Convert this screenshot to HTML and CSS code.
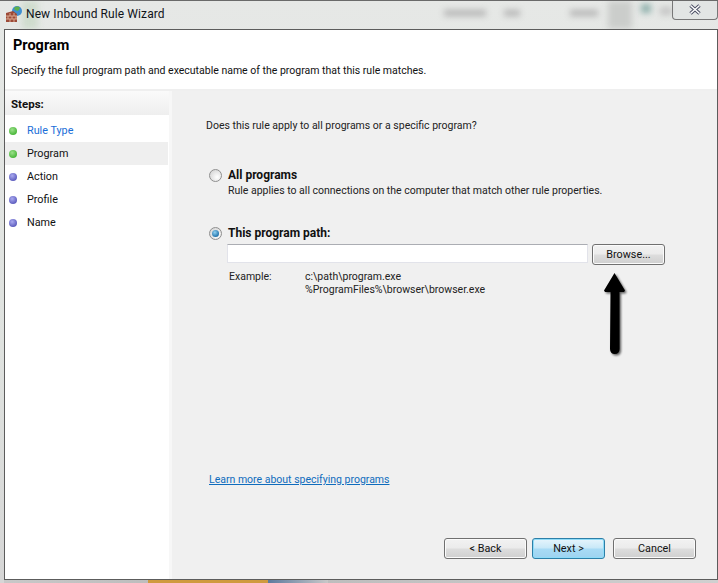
FILE: index.html
```html
<!DOCTYPE html>
<html lang="en">
<head>
<meta charset="utf-8">
<title>New Inbound Rule Wizard</title>
<link rel="stylesheet" href="styles.css">
</head>
<body>
<div class="window">
  <div class="glass" aria-hidden="true">
    <span class="blur b1"></span><span class="blur b2"></span><span class="blur b3"></span><span class="blur b4"></span><span class="blur b5"></span><span class="blur b6"></span><span class="blur b7"></span>
  </div>
  <header class="titlebar">
    <svg class="appicon" width="18" height="18" viewBox="0 0 18 18">
      <circle cx="12" cy="6" r="5" fill="#3f8fd0"/>
      <path d="M9 3c2-2 5-2 6 0l-2 3-3-1z" fill="#5fb04a"/>
      <path d="M1 8l7-2 4 3v8H1z" fill="#9c4a38"/>
      <path d="M1 11h11M1 14h11M5 8v3M9 8v3M3 11v3M7 11v3M11 11v3M5 14v3M9 14v3" stroke="#d9a890" stroke-width="1" fill="none"/>
    </svg>
    <span class="wintitle">New Inbound Rule Wizard</span>
    <button class="close" aria-label="Close">
      <svg width="12" height="11" viewBox="0 0 12 11"><path d="M1.500 1.500l9 8M10.500 1.500l-9 8" stroke="#4a4e63" stroke-width="3.400" fill="none"/><path d="M1.500 1.500l9 8M10.500 1.500l-9 8" stroke="#fff" stroke-width="1.500" fill="none"/></svg>
    </button>
  </header>
  <div class="client">
    <div class="head">
      <h1>Program</h1>
      <p>Specify the full program path and executable name of the program that this rule matches.</p>
    </div>
    <div class="body">
      <nav class="steps">
        <div class="steps-title">Steps:</div>
        <ul>
          <li class="done link"><i class="dot green"></i>Rule Type</li>
          <li class="current"><i class="dot green"></i>Program</li>
          <li><i class="dot blue"></i>Action</li>
          <li><i class="dot blue"></i>Profile</li>
          <li><i class="dot blue"></i>Name</li>
        </ul>
      </nav>
      <main class="panel">
        <p class="question">Does this rule apply to all programs or a specific program?</p>
        <div class="option first">
          <span class="radio"></span>
          <div>
            <div class="opt-title">All programs</div>
            <div class="opt-desc">Rule applies to all connections on the computer that match other rule properties.</div>
          </div>
        </div>
        <div class="option second">
          <span class="radio on"></span>
          <div class="opt-title">This program path:</div>
        </div>
        <div class="pathrow">
          <input class="path" type="text" aria-label="Program path">
          <button class="btn browse">Browse...</button>
          <svg class="arrow" width="30" height="90" viewBox="0 0 30 90">
            <defs><filter id="sh" x="-40%" y="-10%" width="180%" height="120%"><feGaussianBlur stdDeviation="1.300"/></filter></defs>
            <path transform="translate(1.500 1.500)" opacity=".6" filter="url(#sh)" d="M12.500 1L2 18.500l1 1.500h5.500L8 77q.2 5 4.800 5t4.800-5L17.500 20H22l1-1.500z" fill="#000"/>
            <path d="M12.500 1L2 18.500l1 1.500h5.500L8 77q.2 5 4.800 5t4.800-5L17.500 20H22l1-1.500z" fill="#000"/>
          </svg>
        </div>
        <div class="example">
          <span class="ex-label">Example:</span>
          <span class="ex-values">c:\path\program.exe<br>%ProgramFiles%\browser\browser.exe</span>
        </div>
        <a class="learn" href="#">Learn more about specifying programs</a>
        <div class="actions">
          <button class="btn wide">&lt; Back</button>
          <button class="btn wide primary">Next &gt;</button>
          <button class="btn wide cancel">Cancel</button>
        </div>
      </main>
    </div>
  </div>
  <div class="bottomstrip" aria-hidden="true"><span class="orange"></span><span class="bluebar"></span></div>
</div>
</body>
</html>
```
FILE: styles.css
```css
* { box-sizing: border-box; }
html, body { margin: 0; height: 100%; }
body { font-family: Roboto, "Liberation Sans", Arial, sans-serif; font-size: 10.500px; color: #111; overflow: hidden; }
.window {
  position: relative; width: 718px; height: 583px; overflow: hidden;
  display: flex; flex-direction: column;
  background: linear-gradient(#e6e8e6, #dfe2df 60%, #d6d6d6);
  border-top: 1px solid #6a6a6a;
  padding: 0 0 0 4px;
}
.glass { position: absolute; inset: 0; overflow: hidden; }
.blur { position: absolute; filter: blur(3px); display: block; }
.b1 { left: 22px; top: 0; width: 16px; height: 28px; background: #cfdccd; }
.b2 { left: 444px; top: 9px; width: 42px; height: 6px; background: #b4b4b4; }
.b3 { left: 504px; top: 9px; width: 16px; height: 6px; background: #b4b4b4; }
.b4 { left: 570px; top: 9px; width: 28px; height: 6px; background: #b4b4b4; }
.b5 { left: 608px; top: 0; width: 24px; height: 28px; background: #cbcdcb; }
.b6 { left: 641px; top: 3px; width: 10px; height: 9px; background: #8fb0ac; }
.b7 { left: 660px; top: 6px; width: 12px; height: 8px; background: #c4c4c4; }
.titlebar { position: relative; height: 28px; flex: none; display: flex; align-items: center; padding-left: 1px; }
.appicon { flex: none; margin-top: -2px; }
.wintitle { margin-left: 3px; font-size: 12px; letter-spacing: .1px; color: #10141a; margin-top: -2px; }
.close {
  position: absolute; right: 0; top: -1px; width: 46px; height: 20px; padding: 0;
  display: flex; align-items: center; justify-content: center;
  background: rgba(225,228,228,.65); border: 1px solid #777; border-top: 0;
  border-radius: 0 0 4px 4px;
}
.client {
  position: relative; width: 714px; height: 551px; flex: none;
  background: #fff; border: 1px solid #5c5c5c;
  display: flex; flex-direction: column;
}
.head { height: 61px; flex: none; border-bottom: 2px solid #efefef; padding: 8px 0 0 8px; }
.head h1 { margin: 0; font-size: 14.500px; line-height: 16px; font-weight: bold; color: #000; }
.head p { margin: 10px 0 0 -2px; font-size: 10.500px; line-height: 14px; color: #111; white-space: nowrap; }
.body { flex: 1; display: flex; min-height: 0; }
.steps { width: 167px; flex: none; background: #fff; border-right: 3px solid #f7f7f7; }
.steps-title {
  height: 24px; padding: 6px 0 0 6px; font-weight: bold; font-size: 11.500px; line-height: 14px;
  background: linear-gradient(#fafafa, #eeeeee); color: #111;
}
.steps ul { list-style: none; margin: 0; padding: 4px 0 0; }
.steps li { height: 23px; display: flex; align-items: center; font-size: 10.800px; padding-left: 4px; margin-right: 1px; color: #111; }
.steps li.link { color: #1a6ed8; }
.steps li.current { background: #efefef; }
.dot { width: 8px; height: 8px; border-radius: 50%; margin-right: 10px; flex: none; }
.dot.green { background: radial-gradient(circle at 40% 35%, #9be08a, #4cb83c 70%); }
.dot.blue { background: radial-gradient(circle at 40% 35%, #aaaaf0, #6060c0 70%); }
.panel { position: relative; flex: 1; background: #f0f0f0; display: flex; flex-direction: column; padding-left: 34px; min-width: 0; }
.question { margin: 28px 0 0; font-size: 10.500px; line-height: 14px; color: #222; white-space: nowrap; }
.option { display: flex; align-items: flex-start; gap: 6px; margin-left: 3px; }
.option.first { margin-top: 35px; }
.option.second { margin-top: 28px; }
.radio {
  width: 13px; height: 13px; border-radius: 50%; flex: none; margin-top: 1px;
  border: 1px solid #8f8f8f;
  background: radial-gradient(circle at 65% 65%, #fff, #dcdcdc 70%);
  position: relative;
}
.radio.on::after {
  content: ""; position: absolute; left: 2px; top: 2px; width: 7px; height: 7px; border-radius: 50%;
  background: radial-gradient(circle at 40% 35%, #8fd0f0, #1d6fa8 75%);
}
.opt-title { font-weight: bold; font-size: 12px; line-height: 14px; color: #111; }
.opt-desc { font-size: 10.500px; line-height: 14px; margin-top: 2px; color: #222; white-space: nowrap; }
.pathrow { position: relative; display: flex; margin: 4px 0 0 21px; height: 20px; gap: 4px; }
.path { width: 361px; height: 19px; background: #fff; border: 1px solid #e2e3ea; border-top-color: #abadb3; padding: 0; }
.btn {
  font: 10.800px Roboto, "Liberation Sans", Arial, sans-serif; color: #111; padding: 0;
  border: 1px solid #707070; border-radius: 3px;
  background: linear-gradient(#f2f2f2, #ebebeb 48%, #dddddd 52%, #cfcfcf);
  box-shadow: inset 0 0 0 1px #fbfbfb;
}
.browse { width: 73px; height: 21px; }
.arrow { position: absolute; left: 375px; top: 28px; }
.example { display: flex; margin: 6px 0 0 23px; font-size: 10.500px; line-height: 13px; color: #222; }
.ex-label { width: 76px; flex: none; }
.ex-values { white-space: nowrap; }
.learn { margin: 177px 0 0 3px; color: #0f6cbd; font-size: 10.500px; line-height: 14px; text-decoration: underline; white-space: nowrap; }
.actions { display: flex; margin: 51px 0 0 238px; }
.wide { width: 83px; height: 21px; }
.primary { width: 73px; margin-left: 5px; border-color: #2c7fa8; background: linear-gradient(#e6f5fc, #c8e8f8 48%, #a8dbf5 52%, #9ed3f0); box-shadow: inset 0 0 0 1px #8fdcf8; }
.cancel { margin-left: 8px; }
.bottomstrip { position: relative; flex: 1; background: linear-gradient(90deg, #c8c8c8, #b8b8b8 30%, #d0d0d0); }
.orange { position: absolute; left: 144px; width: 120px; top: 0; bottom: 0; background: #cf9a3f; }
.bluebar { position: absolute; left: 264px; width: 60px; top: 0; bottom: 0; background: linear-gradient(90deg, #5d7a9e, #c8c8c8); }
```
